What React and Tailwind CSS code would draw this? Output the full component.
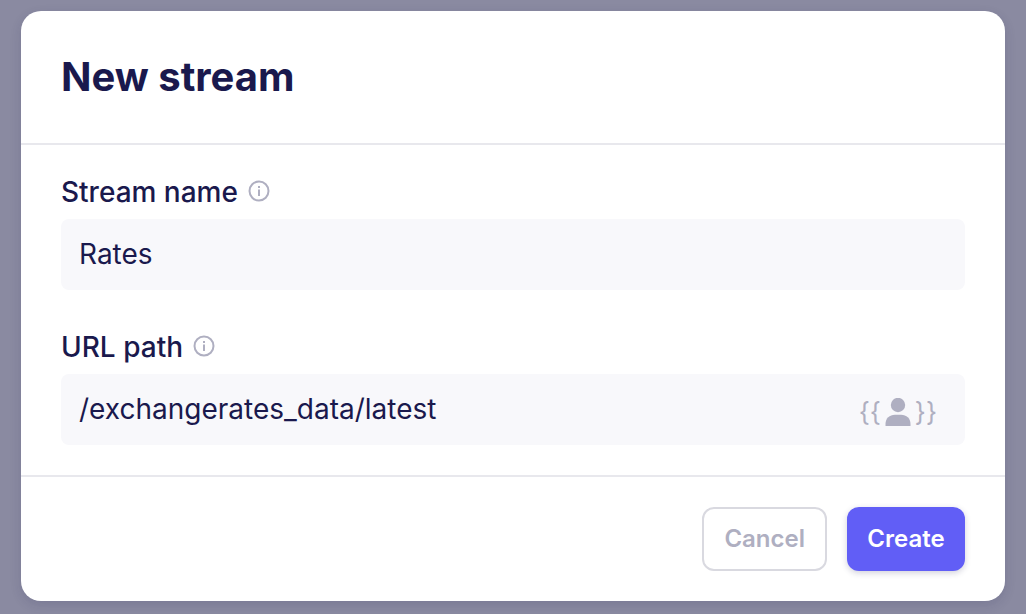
import { useState } from "react";

function InfoIcon() {
  return (
    <svg viewBox="0 0 22 22" className="size-[22px]" fill="none" aria-hidden="true">
      <circle cx="11" cy="11" r="9.5" stroke="currentColor" strokeWidth="2" />
      <rect x="10" y="9.5" width="2" height="6.5" fill="currentColor" />
      <rect x="10" y="6" width="2" height="2" fill="currentColor" />
    </svg>
  );
}

function UserIcon() {
  return (
    <svg viewBox="0 0 26 28" className="h-7 w-[26px]" fill="currentColor" aria-hidden="true">
      <circle cx="13" cy="7" r="7.2" />
      <path d="M0.5 28V26C0.5 20.5 4.5 16.8 10 16.8H16C21.5 16.8 25.5 20.5 25.5 26V28Z" />
    </svg>
  );
}

function Field({ id, label, value, onChange, children }) {
  return (
    <div className="flex flex-col gap-[10px]">
      <div className="flex items-center gap-[10px]">
        <label htmlFor={id} className="text-[28px] leading-[34px] font-medium">
          {label}
        </label>
        <button type="button" aria-label={`About ${label}`} className="pb-[2px] text-[#afafc1]">
          <InfoIcon />
        </button>
      </div>
      <div className="flex h-[71px] items-center rounded-lg bg-[#f8f8fb] pr-7 pl-[18px]">
        <input
          id={id}
          type="text"
          value={value}
          onChange={(e) => onChange(e.target.value)}
          className="h-full min-w-0 flex-1 bg-transparent pb-[2px] text-[28px] leading-[34px] outline-none"
        />
        {children}
      </div>
    </div>
  );
}

export default function App() {
  const [name, setName] = useState("Rates");
  const [path, setPath] = useState("/exchangerates_data/latest");

  return (
    <div className="min-h-screen bg-[#8a8aa1] px-[21px] pt-[11px] pb-[13px] font-['Inter',sans-serif] text-[#1a194d]">
      <form
        role="dialog"
        aria-labelledby="dialog-title"
        onSubmit={(e) => e.preventDefault()}
        className="rounded-[20px] bg-white shadow-[0_4px_12px_rgba(26,25,77,0.14)]"
      >
        <header className="border-b-2 border-[#e8e8ed] px-10 py-[41px]">
          <h1 id="dialog-title" className="text-[40px] leading-[50px] font-bold">
            New stream
          </h1>
        </header>

        <div className="flex flex-col gap-10 px-10 py-[30px]">
          <Field id="stream-name" label="Stream name" value={name} onChange={setName} />
          <Field id="url-path" label="URL path" value={path} onChange={setPath}>
            <button
              type="button"
              aria-label="Insert user input"
              className="flex items-center gap-1 pt-[5px] text-[26px] leading-7 text-[#afafc1]"
            >
              <span>{"{{"}</span>
              <UserIcon />
              <span>{"}}"}</span>
            </button>
          </Field>
        </div>

        <footer className="flex justify-end gap-5 border-t-2 border-[#e8e8ed] px-10 py-[30px]">
          <button
            type="button"
            className="h-16 rounded-xl border-2 border-[#d9d9e0] px-5 text-2xl font-semibold text-[#afafc1]"
          >
            Cancel
          </button>
          <button
            type="submit"
            className="h-16 min-w-[118px] rounded-xl bg-[#615ef6] px-5 text-2xl font-semibold text-white shadow-[0_2px_6px_rgba(26,25,77,0.2)]"
          >
            Create
          </button>
        </footer>
      </form>
    </div>
  );
}
